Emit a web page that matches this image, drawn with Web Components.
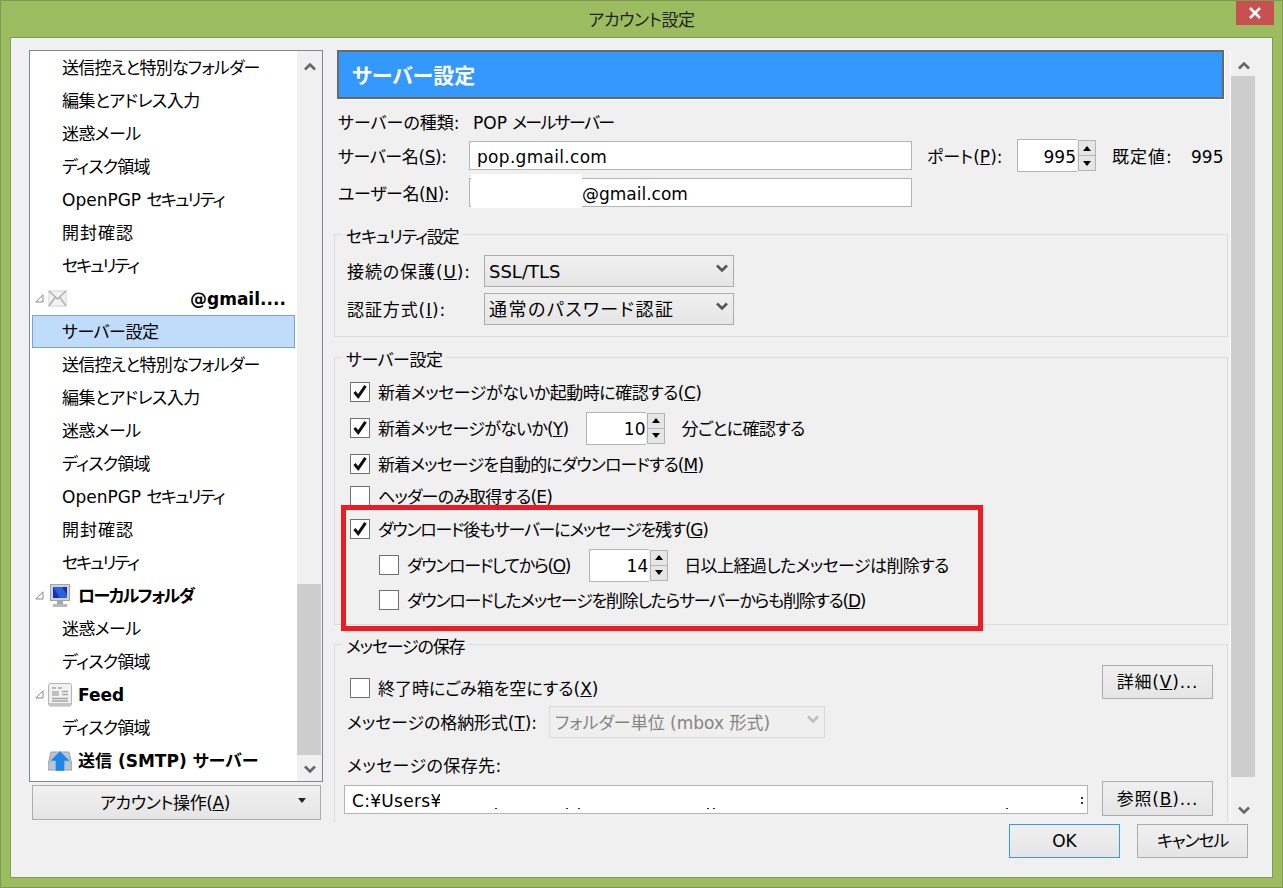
<!DOCTYPE html>
<html lang="ja">
<head>
<meta charset="utf-8">
<title>アカウント設定</title>
<style>
  html, body { margin: 0; padding: 0; height: 100%; }
  body {
    overflow: hidden;
    font: 17px/24px "DejaVu Sans", "Noto Sans CJK JP", sans-serif;
    font-feature-settings: "palt";
    color: #000;
  }
</style>
</head>
<body>
<win-dialog caption="アカウント設定">
  <account-tree slot="left"></account-tree>
  <win-button slot="left" class="menu" menu style="letter-spacing:-.4px"><span>アカウント操作(<u>A</u>)</span></win-button>
  <server-pane slot="right"></server-pane>
  <win-button slot="footer" focused>OK</win-button>
  <win-button slot="footer" style="letter-spacing:-1.2px">キャンセル</win-button>
</win-dialog>

<script>
const CHEVRON_UP = 'M1 7.5 L6 2.5 L11 7.5';
const CHEVRON_DOWN = 'M1 1.5 L6 6.5 L11 1.5';

class WinDialog extends HTMLElement {
  constructor() {
    super();
    this.attachShadow({ mode: 'open' });
  }

  connectedCallback() {
    this.shadowRoot.innerHTML = `
      <style>
        :host {
          display: flex;
          flex-direction: column;
          box-sizing: border-box;
          width: 1283px;
          height: 888px;
          background: #9bbd60;
          border: 1px solid #7f9a55;
        }
        .titlebar {
          display: grid;
          grid-template-columns: 1fr auto 1fr;
          height: 36px;
          flex-shrink: 0;
        }
        .caption {
          grid-column: 2;
          line-height: 38px;
          letter-spacing: -.4px;
          color: #222;
        }
        .close {
          grid-column: 3;
          justify-self: end;
          display: flex;
          align-items: center;
          justify-content: center;
          width: 38px;
          height: 24px;
          margin-right: 8px;
          background: #c75050;
        }
        .client {
          flex: 1;
          display: flex;
          flex-direction: column;
          margin: 0 9px 9px;
          padding: 12px 16px 0 18px;
          background: #f0f0f0;
          border: 1px solid #7f9a55;
        }
        .main {
          display: flex;
          height: 772px;
        }
        .left {
          display: flex;
          flex-direction: column;
          width: 294px;
          margin-right: 11px;
        }
        .right {
          flex: 1;
          min-width: 0;
        }
        .footer {
          display: flex;
          justify-content: flex-end;
          gap: 17px;
          margin-top: 2px;
          padding-right: 8px;
        }
        ::slotted(win-button.menu) {
          width: 289px;
          height: 35px;
          margin: 3px 0 0 3px;
        }
        ::slotted(win-button[slot="footer"]) {
          width: 111px;
          height: 34px;
        }
      </style>
      <div class="titlebar">
        <div class="caption">${this.getAttribute('caption')}</div>
        <div class="close">
          <svg width="14" height="12" viewBox="0 0 14 12"><path d="M2 1 L12 11 M12 1 L2 11" stroke="#fff" stroke-width="2.6" fill="none"/></svg>
        </div>
      </div>
      <div class="client">
        <div class="main">
          <div class="left"><slot name="left"></slot></div>
          <div class="right"><slot name="right"></slot></div>
        </div>
        <div class="footer"><slot name="footer"></slot></div>
      </div>
    `;
  }
}

class WinScrollbar extends HTMLElement {
  constructor() {
    super();
    this.attachShadow({ mode: 'open' });
  }

  connectedCallback() {
    this.shadowRoot.innerHTML = `
      <style>
        :host {
          display: flex;
          flex-direction: column;
          width: 25px;
          flex-shrink: 0;
          background: #f0f0f0;
        }
        .before { height: var(--before); padding-top: 11px; box-sizing: border-box; flex-shrink: 0; }
        .thumb { height: var(--thumb); width: 24px; background: #cdcdcd; flex-shrink: 0; }
        .after { flex: 1; display: flex; align-items: flex-end; padding-bottom: 7px; min-height: 0; }
        svg { display: block; margin-left: 7px; }
        path { fill: none; stroke: #666; stroke-width: 2.6; }
      </style>
      <div class="before"><svg width="12" height="9" viewBox="0 0 12 9"><path d="${CHEVRON_UP}"/></svg></div>
      <div class="thumb"></div>
      <div class="after"><svg width="12" height="9" viewBox="0 0 12 9"><path d="${CHEVRON_DOWN}"/></svg></div>
    `;
  }
}

const TREE_ICONS = {
  mail: `<svg width="19" height="17" viewBox="0 0 19 17">
      <rect width="19" height="17" fill="#e6e6e6"/>
      <rect x="2" y="2" width="15" height="13" fill="#f2f2f2"/>
      <path d="M1 1 L9.5 9 L18 1 M1 16 L7 7.5 M18 16 L12 7.5" fill="none" stroke="#b2b2b2" stroke-width="1.6"/>
    </svg>`,
  computer: `<svg width="24" height="24" viewBox="0 0 24 24">
      <rect x="2.5" y="0.5" width="19" height="16" fill="#d2d2d2" stroke="#a4a4a4"/>
      <rect x="5" y="3" width="14" height="11" fill="#1133bb"/>
      <path d="M5 3 L14 3 L19 11 L19 14 L12 14 Z" fill="#2a62d8"/>
      <rect x="9" y="17" width="6" height="3" fill="#a8a8a8"/>
      <rect x="5" y="20" width="14" height="3" fill="#b8b8b8"/>
    </svg>`,
  feed: `<svg width="24" height="24" viewBox="0 0 24 24">
      <rect x="0.5" y="0.5" width="23" height="22.5" rx="2" fill="#f1f1f1" stroke="#b4b4b4"/>
      <rect x="1" y="20" width="22" height="3" fill="#c4c4c4"/>
      <rect x="4" y="8" width="7" height="5" fill="#c0c0c0"/>
      <path d="M4 5 H8 M10 5 H14 M14 8.5 H20 M14 11.5 H20 M4 15.5 H20 M4 18 H20" stroke="#a6a6a6" stroke-width="1.4"/>
    </svg>`,
  outbox: `<svg width="24" height="20" viewBox="0 0 24 20">
      <path d="M3 1 H21 L24 14 V19 H0 V14 Z" fill="#bcc4cc" stroke="#9aa0a8"/>
      <path d="M12 0 L22 10 H16.5 V20 H7.5 V10 H2 Z" fill="#1f86e4" stroke="#7dbcf0" stroke-width="0.8"/>
    </svg>`
};

class AccountTree extends HTMLElement {
  constructor() {
    super();
    this.attachShadow({ mode: 'open' });
  }

  connectedCallback() {
    const sub = [
      { text: '送信控えと特別なフォルダー', ls: -0.77 },
      { text: '編集とアドレス入力', ls: -0.55 },
      { text: '迷惑メール', ls: -0.6 },
      { text: 'ディスク領域', ls: -0.8 },
      { text: 'OpenPGP <span style="letter-spacing:-1.8px">セキュリティ</span>' },
      { text: '開封確認', ls: 1 },
      { text: 'セキュリティ', ls: -2 }
    ];
    const rows = [
      ...sub,
      { head: true, icon: 'mail', text: '@gmail....', indent: 112 },
      { text: 'サーバー設定', ls: -0.5, selected: true },
      ...sub,
      { head: true, icon: 'computer', text: 'ローカルフォルダ', ls: -1.6 },
      { text: '迷惑メール', ls: -0.6 },
      { text: 'ディスク領域', ls: -0.8 },
      { head: true, icon: 'feed', text: 'Feed' },
      { text: 'ディスク領域', ls: -0.8 },
      { head: true, icon: 'outbox', text: '送信 (SMTP) サーバー', noTwisty: true }
    ];
    const html = rows.map(r => {
      const ls = r.ls ? `letter-spacing:${r.ls}px;` : '';
      if (!r.head) return `<div class="row child${r.selected ? ' selected' : ''}" style="${ls}">${r.text}</div>`;
      const twisty = r.noTwisty ? '<span class="twisty"></span>'
        : '<span class="twisty"><svg width="9" height="9" viewBox="0 0 9 9"><path d="M0.8 8 L8 8 L8 0.8 Z" fill="#fff" stroke="#888"/></svg></span>';
      const pad = r.indent ? `margin-left:${r.indent}px;` : '';
      return `<div class="row head">${twisty}<span class="icon">${TREE_ICONS[r.icon]}</span><b style="${pad}${ls}">${r.text}</b></div>`;
    }).join('');

    this.shadowRoot.innerHTML = `
      <style>
        :host {
          display: flex;
          box-sizing: border-box;
          width: 294px;
          height: 732px;
          flex-shrink: 0;
          background: #fff;
          border: 1px solid #828790;
        }
        .rows {
          flex: 1;
          min-width: 0;
          overflow: hidden;
        }
        .row {
          display: flex;
          align-items: center;
          box-sizing: border-box;
          height: 33px;
          margin-left: 2px;
          margin-right: 2px;
          white-space: pre;
        }
        .child { padding-left: 30px; }
        .selected {
          background: #bfdcfb;
          border: 1px solid #7da2ce;
          padding-left: 29px;
        }
        .twisty { display: flex; width: 13px; margin-left: 3px; flex-shrink: 0; }
        .icon { display: flex; width: 30px; flex-shrink: 0; }
        b { font-weight: 700; }
        win-scrollbar { --before: 533px; --thumb: 171px; }
      </style>
      <div class="rows">${html}</div>
      <win-scrollbar></win-scrollbar>
    `;
  }
}

class WinButton extends HTMLElement {
  constructor() {
    super();
    this.attachShadow({ mode: 'open' });
  }

  connectedCallback() {
    const marker = this.hasAttribute('menu')
      ? '<svg class="marker" width="8" height="5" viewBox="0 0 8 5"><path d="M0 0 H8 L4 5 Z" fill="#222"/></svg>' : '';
    this.shadowRoot.innerHTML = `
      <style>
        :host {
          display: flex;
          align-items: center;
          justify-content: center;
          box-sizing: border-box;
          flex-shrink: 0;
          background: linear-gradient(#f0f0f0, #e5e5e5);
          border: 1px solid #acacac;
          white-space: nowrap;
        }
        :host([focused]) { border-color: #3399ff; }
        :host([menu]) { position: relative; padding-right: 23px; }
        .marker { position: absolute; right: 14px; top: 12px; }
      </style>
      <span><slot></slot></span>${marker}
    `;
  }
}

class DropList extends HTMLElement {
  constructor() {
    super();
    this.attachShadow({ mode: 'open' });
  }

  connectedCallback() {
    this.shadowRoot.innerHTML = `
      <style>
        :host {
          display: flex;
          align-items: center;
          justify-content: space-between;
          box-sizing: border-box;
          height: 32px;
          padding: 0 5px 0 4px;
          background: linear-gradient(#f0f0f0, #e5e5e5);
          border: 1px solid #acacac;
          white-space: nowrap;
        }
        :host([disabled]) {
          padding-left: 5px;
          background: #efefef;
          border-color: #d9d9d9;
          color: #838383;
        }
        span { padding-top: 2px; }
        svg { margin-bottom: 5px; }
        path { fill: none; stroke: #555; stroke-width: 2.6; }
        :host([disabled]) path { stroke: #bdbdbd; }
      </style>
      <span><slot></slot></span>
      <svg width="12" height="9" viewBox="0 0 12 9"><path d="${CHEVRON_DOWN}"/></svg>
    `;
  }
}

class TextField extends HTMLElement {
  constructor() {
    super();
    this.attachShadow({ mode: 'open' });
  }

  connectedCallback() {
    this.shadowRoot.innerHTML = `
      <style>
        :host {
          display: flex;
          align-items: center;
          position: relative;
          box-sizing: border-box;
          height: 29px;
          padding-left: var(--text-left, 7px);
          background: #fff;
          border: 1px solid #b4b4b4;
          white-space: nowrap;
        }
        span { padding-top: 2px; }
      </style>
      <span><slot></slot></span><slot name="over"></slot>
    `;
  }
}

class SpinBox extends HTMLElement {
  constructor() {
    super();
    this.attachShadow({ mode: 'open' });
  }

  connectedCallback() {
    this.shadowRoot.innerHTML = `
      <style>
        :host {
          display: flex;
          flex-shrink: 0;
          height: 33px;
          letter-spacing: 0;
        }
        .value {
          display: flex;
          align-items: center;
          justify-content: flex-end;
          box-sizing: border-box;
          width: 60px;
          padding: 2px 1px 0 0;
          background: #fff;
          border: 1px solid #b4b4b4;
          border-right: 0;
        }
        .arrows {
          display: flex;
          flex-direction: column;
          justify-content: center;
          width: 18px;
          margin-left: 1px;
        }
        .arrow {
          display: flex;
          align-items: center;
          justify-content: center;
          box-sizing: border-box;
          height: 16px;
          background: #e6e6e6;
          border: 1px solid #b4b4b4;
        }
        .arrow + .arrow { margin-top: -1px; }
      </style>
      <div class="value"><slot></slot></div>
      <div class="arrows">
        <div class="arrow"><svg width="8" height="5" viewBox="0 0 8 5"><path d="M4 0 L8 5 H0 Z"/></svg></div>
        <div class="arrow"><svg width="8" height="5" viewBox="0 0 8 5"><path d="M0 0 H8 L4 5 Z"/></svg></div>
      </div>
    `;
  }
}

class CheckRow extends HTMLElement {
  constructor() {
    super();
    this.attachShadow({ mode: 'open' });
  }

  connectedCallback() {
    const tick = this.hasAttribute('checked')
      ? '<svg width="18" height="18" viewBox="0 0 18 18"><path d="M3.5 9 L7.2 13.6 L14.5 2.8" fill="none" stroke="#111" stroke-width="3"/></svg>' : '';
    this.shadowRoot.innerHTML = `
      <style>
        :host {
          display: flex;
          align-items: center;
          gap: 8px;
          white-space: nowrap;
        }
        .box {
          box-sizing: border-box;
          flex-shrink: 0;
          width: 20px;
          height: 20px;
          background: #fff;
          border: 1px solid #707070;
        }
        .text { padding-top: 2px; }
        svg { display: block; }
      </style>
      <div class="box">${tick}</div>
      <span class="text"><slot></slot></span>
    `;
  }
}

class GroupBox extends HTMLElement {
  constructor() {
    super();
    this.attachShadow({ mode: 'open' });
  }

  connectedCallback() {
    this.shadowRoot.innerHTML = `
      <style>
        :host {
          display: block;
          position: relative;
          box-sizing: border-box;
          border: 1px solid #dcdcdc;
        }
        .legend {
          width: max-content;
          height: 24px;
          margin: -10px 0 -14px 7px;
          padding: 0 4px;
          background: #f0f0f0;
        }
        .body { padding: var(--body-padding, 0); }
      </style>
      <div class="legend" style="letter-spacing:${this.getAttribute('spacing') || 0}px">${this.getAttribute('legend')}</div>
      <div class="body"><slot></slot></div>
    `;
  }
}

class ServerPane extends HTMLElement {
  constructor() {
    super();
    this.attachShadow({ mode: 'open' });
  }

  connectedCallback() {
    this.shadowRoot.innerHTML = `
      <style>
        :host {
          display: flex;
          height: 772px;
          overflow: hidden;
        }
        .content {
          width: 894px;
          flex-shrink: 0;
          margin-right: 3px;
        }
        .banner {
          box-sizing: border-box;
          width: 887px;
          height: 49px;
          margin-left: 3px;
          padding-left: 13px;
          background: #3399ff;
          border: 2px solid #696969;
          box-shadow: 1px 1px 0 #fff;
          color: #fff;
          font-size: 21px;
          font-weight: 700;
          line-height: 49px;
        }
        .line {
          display: flex;
          align-items: center;
          margin-left: 4px;
          white-space: nowrap;
        }
        .line > span { padding-top: 2px; }
        .kind { height: 24px; margin-top: 11px; }
        .kind span:first-child { width: 135px; }
        .kind span span { letter-spacing: -1.7px; }
        .host { height: 33px; margin-top: 5px; }
        .host .name { width: 131px; letter-spacing: -.4px; }
        .host text-field { width: 443px; letter-spacing: .3px; }
        .port { width: 90px; margin-left: 15px; }
        .default { width: 78px; margin-left: 16px; letter-spacing: 1px; }
        .default + span { margin-left: 1px; }
        .user { height: 29px; margin-top: 6px; }
        .user .name { width: 131px; letter-spacing: -.4px; }
        .user text-field { width: 443px; --text-left: 112px; }
        .hide-user {
          position: absolute;
          left: 1px;
          top: -5px;
          width: 111px;
          height: 34px;
          background: #fff;
        }
        group-box.security { height: 103px; margin-top: 27px; --body-padding: 20px 0 0 12px; }
        .pick {
          display: grid;
          grid-template-columns: 137px 250px;
          align-items: center;
          height: 32px;
          margin-bottom: 6px;
        }
        .pick span { padding-top: 2px; letter-spacing: .9px; }
        .pick drop-list { font-size: 18px; }
        group-box.server { height: 268px; margin-top: 20px; --body-padding: 18px 0 0 15px; }
        .checks {
          display: flex;
          flex-direction: column;
        }
        .checks > * { height: 32px; flex-shrink: 0; }
        .checks .r2 { margin-top: 4px; }
        .checks .r3 { margin-top: 4px; }
        .checks .r5 { margin-top: 1px; }
        .checks .r6 { margin-top: 4px; margin-left: 29px; }
        .checks .r7 { margin-top: 3px; margin-left: 29px; }
        .inline { display: flex; align-items: center; white-space: nowrap; }
        .inline spin-box { margin: -2px 16px 0 0; }
        .notice {
          position: absolute;
          left: 6px;
          top: 147px;
          box-sizing: border-box;
          width: 642px;
          height: 126px;
          border: 5px solid #ed1c24;
        }
        group-box.store { height: 300px; margin-top: 19px; --body-padding: 20px 14px 0 12px; }
        .top { display: flex; justify-content: space-between; height: 34px; }
        .top check-row { height: 22px; margin: 12px 0 0 3px; }
        .top win-button, .path win-button { width: 111px; letter-spacing: .8px; }
        .format { display: flex; align-items: center; height: 32px; margin-top: 7px; }
        .format > span { width: 202px; padding-top: 2px; white-space: nowrap; letter-spacing: -.1px; }
        .format drop-list { width: 276px; }
        .path-label { height: 24px; margin-top: 16px; letter-spacing: .4px; }
        .path { display: flex; justify-content: space-between; margin: 3px 0 0 -3px; height: 35px; }
        .path text-field { width: 744px; margin-top: 4px; letter-spacing: .3px; }
        .path win-button { height: 35px; }
        .hide-path {
          position: absolute;
          left: 95px;
          top: 0;
          width: 642px;
          height: 22px;
          background: #fff;
        }
        .specks { position: absolute; left: 0; top: 0; }
      </style>
      <div class="content">
        <div class="banner">サーバー設定</div>
        <div class="line kind"><span>サーバーの種類:</span><span>POP <span>メールサーバー</span></span></div>
        <div class="line host">
          <span class="name">サーバー名(<u>S</u>):</span>
          <text-field>pop.gmail.com</text-field>
          <span class="port">ポート(<u>P</u>):</span>
          <spin-box>995</spin-box>
          <span class="default">既定値:</span>
          <span>995</span>
        </div>
        <div class="line user">
          <span class="name">ユーザー名(<u>N</u>):</span>
          <text-field>@gmail.com<i slot="over" class="hide-user"></i></text-field>
        </div>

        <group-box class="security" legend="セキュリティ設定" spacing="-1.2">
          <div class="pick"><span>接続の保護(<u>U</u>):</span><drop-list>SSL/TLS</drop-list></div>
          <div class="pick"><span>認証方式(<u>I</u>):</span><drop-list style="letter-spacing:1.5px">通常のパスワード認証</drop-list></div>
        </group-box>

        <group-box class="server" legend="サーバー設定" spacing="-.5">
          <div class="checks">
            <check-row checked style="letter-spacing:-.5px">新着メッセージがないか起動時に確認する(<u>C</u>)</check-row>
            <check-row checked class="r2"><span class="inline"><span style="letter-spacing:-.75px">新着メッセージがないか(<u>Y</u>)</span><spin-box style="margin-left:18px">10</spin-box><span style="letter-spacing:-.6px">分ごとに確認する</span></span></check-row>
            <check-row checked class="r3" style="letter-spacing:-.9px">新着メッセージを自動的にダウンロードする(<u>M</u>)</check-row>
            <check-row class="r4" style="letter-spacing:-.8px">ヘッダーのみ取得する(E)</check-row>
            <check-row checked class="r5" style="letter-spacing:-1.25px">ダウンロード後もサーバーにメッセージを残す(<u>G</u>)</check-row>
            <check-row class="r6"><span class="inline"><span style="letter-spacing:-1.3px">ダウンロードしてから(<u>O</u>)</span><spin-box style="margin-left:19px">14</spin-box><span style="letter-spacing:-.6px">日以上経過したメッセージは削除する</span></span></check-row>
            <check-row class="r7" style="letter-spacing:-1.25px">ダウンロードしたメッセージを削除したらサーバーからも削除する(<u>D</u>)</check-row>
          </div>
          <div class="notice"></div>
        </group-box>

        <group-box class="store" legend="メッセージの保存" spacing="-1.2">
          <div class="top">
            <check-row>終了時にごみ箱を空にする(<u>X</u>)</check-row>
            <win-button>詳細(<u>V</u>)...</win-button>
          </div>
          <div class="format">
            <span>メッセージの格納形式(<u>T</u>):</span>
            <drop-list disabled>フォルダー単位 (mbox 形式)</drop-list>
          </div>
          <div class="path-label">メッセージの保存先:</div>
          <div class="path">
            <text-field>C:¥Users¥<i slot="over" class="hide-path"></i>
              <svg slot="over" class="specks" width="742" height="27" viewBox="0 0 742 27">
                <path d="M150 22h2v1h-2z M221 22h2v1h-2z M233 22h2v1h-2z M362 22h2v1h-2z M368 22h2v1h-2z M661 22h2v1h-2z M736 11h2v2h-2z M736 16h2v2h-2z" fill="#333"/>
              </svg>
            </text-field>
            <win-button>参照(<u>B</u>)...</win-button>
          </div>
        </group-box>
      </div>
      <win-scrollbar style="--before:26px;--thumb:701px;width:24px;box-shadow:-1px 0 0 #fff"></win-scrollbar>
    `;
  }
}

customElements.define('win-dialog', WinDialog);
customElements.define('win-scrollbar', WinScrollbar);
customElements.define('account-tree', AccountTree);
customElements.define('win-button', WinButton);
customElements.define('drop-list', DropList);
customElements.define('text-field', TextField);
customElements.define('spin-box', SpinBox);
customElements.define('check-row', CheckRow);
customElements.define('group-box', GroupBox);
customElements.define('server-pane', ServerPane);
</script>
</body>
</html>
